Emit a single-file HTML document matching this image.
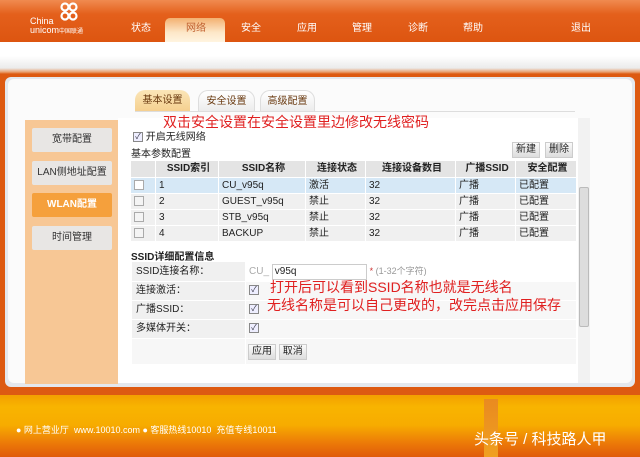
<!DOCTYPE html>
<html><head><meta charset="utf-8"><style>
*{margin:0;padding:0;box-sizing:border-box}
body{width:640px;height:457px;overflow:hidden;position:relative;font-family:"Liberation Sans","Noto Sans CJK SC",sans-serif;font-size:10px;color:#222;background:#fff}
.a{position:absolute}
.top{left:0;top:0;width:640px;height:42px;background:linear-gradient(#f08a50 0,#e4601c 14px,#dd5510 42px)}
.nav{top:19px;color:#fff;font-size:10px}
.band{left:0;top:42px;width:640px;height:32px;background:linear-gradient(#fff 0,#fff 14px,#ebebeb 26px,#e9a070 30px,#dd5a12 32px)}
.outer{left:0;top:74px;width:640px;height:322px;background:#dd5a12}
.foot{left:0;top:395px;width:640px;height:62px;background:linear-gradient(#f3a000 0,#f8b400 12px,#f7ac00 30px,#ec7a08 48px,#e05a0a 62px)}
.tab{top:90px;height:21px;border-radius:10px 10px 0 0;font-size:10px;text-align:center;line-height:21px;color:#6a3a10}
.side{left:25px;top:120px;width:93px;height:264px;background:#f7c795}
.btn{left:32px;width:80px;height:24px;background:#e8e6e4;text-align:center;line-height:24px;font-size:10px;color:#333;border-radius:2px}
table{border-collapse:collapse;table-layout:fixed}
td{border:1px solid #fff;height:16px;padding:0 0 0 3px;font-size:10px;line-height:14px;white-space:nowrap;overflow:hidden;vertical-align:middle}
.cb{display:inline-block;width:10px;height:10px;border:1px solid #aaa;background:#f4f4f4;vertical-align:middle}
.ck{display:inline-block;width:10px;height:10px;border:1px solid #888;background:#eef;font-size:8px;line-height:8px;text-align:center;color:#334;vertical-align:middle}
.red{color:#e02020;font-size:14px;white-space:nowrap}
.sb{display:inline-block;border:1px solid #ccc;background:linear-gradient(#fafafa,#ddd);padding:0 3px;height:16px;line-height:14px;font-size:10px}
</style></head><body>
<div class="a top"></div>
<div class="a" style="left:30px;top:17px;color:#fff;font-size:9px;line-height:9px">China<br>unicom<span style="font-size:6px">中国联通</span></div>
<svg class="a" style="left:58px;top:2px" width="22" height="20" viewBox="0 0 22 20"><g fill="none" stroke="#fff" stroke-width="2.2"><circle cx="7" cy="5" r="3.5"/><circle cx="15" cy="5" r="3.5"/><circle cx="7" cy="14" r="3.5"/><circle cx="15" cy="14" r="3.5"/></g></svg>
<div class="a" style="left:165px;top:18px;width:60px;height:24px;background:linear-gradient(#f3b070,#fde7c8 60%,#fff4e0);border-radius:5px 5px 0 0"></div>
<div class="a nav" style="left:131px">状态</div>
<div class="a nav" style="left:186px;color:#c06030">网络</div>
<div class="a nav" style="left:241px">安全</div>
<div class="a nav" style="left:297px">应用</div>
<div class="a nav" style="left:352px">管理</div>
<div class="a nav" style="left:408px">诊断</div>
<div class="a nav" style="left:463px">帮助</div>
<div class="a nav" style="left:571px">退出</div>
<div class="a band"></div>
<div class="a outer"></div>
<div class="a" style="left:5px;top:77px;width:630px;height:310px;background:#e4e8ee;border-radius:6px"></div>
<div class="a" style="left:8px;top:79px;width:624px;height:304px;background:#fbfbfb;border-radius:6px"></div>
<div class="a tab" style="left:135px;width:55px;background:linear-gradient(#fbe6b8,#f5d090)">基本设置</div>
<div class="a tab" style="left:198px;width:57px;background:linear-gradient(#fff,#ececec);border:1px solid #ddd;border-bottom:0">安全设置</div>
<div class="a tab" style="left:260px;width:55px;background:linear-gradient(#fff,#ececec);border:1px solid #ddd;border-bottom:0">高级配置</div>
<div class="a" style="left:135px;top:111px;width:440px;height:1px;background:#ddd"></div>
<div class="a side"></div>
<div class="a btn" style="top:128px">宽带配置</div>
<div class="a btn" style="top:161px">LAN侧地址配置</div>
<div class="a btn" style="top:193px;background:#f5a03c;color:#fff;font-weight:bold">WLAN配置</div>
<div class="a btn" style="top:226px">时间管理</div>
<div class="a" style="left:118px;top:118px;width:472px;height:265px;background:#fff"></div>
<div class="a" style="left:578px;top:118px;width:12px;height:265px;background:#f2f2f2"></div>
<div class="a" style="left:579px;top:187px;width:10px;height:140px;background:#ddd;border:1px solid #bbb;border-radius:2px"></div>
<div class="a red" style="left:163px;top:112px">双击安全设置在安全设置里边修改无线密码</div>
<div class="a" style="left:133px;top:128px"><span class="ck">✓</span> 开启无线网络</div>
<div class="a" style="left:131px;top:145px">基本参数配置</div>
<div class="a sb" style="left:512px;top:142px">新建</div>
<div class="a sb" style="left:545px;top:142px">删除</div>
<table class="a" style="left:130px;top:160px;width:447px">
<tr style="background:#e4e4e4;font-weight:bold"><td style="width:25px;height:17px"></td><td style="width:63px;text-align:center">SSID索引</td><td style="width:87px;text-align:center">SSID名称</td><td style="width:60px;text-align:center">连接状态</td><td style="width:90px;text-align:center">连接设备数目</td><td style="width:60px;text-align:center">广播SSID</td><td style="text-align:center">安全配置</td></tr>
<tr style="background:#d6e8f6"><td><span class="cb" style="background:#fff"></span></td><td>1</td><td>CU_v95q</td><td>激活</td><td>32</td><td>广播</td><td>已配置</td></tr>
<tr style="background:#f0f0f0"><td><span class="cb"></span></td><td>2</td><td>GUEST_v95q</td><td>禁止</td><td>32</td><td>广播</td><td>已配置</td></tr>
<tr style="background:#f0f0f0"><td><span class="cb"></span></td><td>3</td><td>STB_v95q</td><td>禁止</td><td>32</td><td>广播</td><td>已配置</td></tr>
<tr style="background:#f0f0f0"><td><span class="cb"></span></td><td>4</td><td>BACKUP</td><td>禁止</td><td>32</td><td>广播</td><td>已配置</td></tr>
</table>
<div class="a" style="left:131px;top:248px;font-weight:bold">SSID详细配置信息</div>
<table class="a" style="left:131px;top:261px;width:446px">
<tr style="background:#f0f0f0"><td style="width:114px;padding-left:4px;height:20px">SSID连接名称：</td><td style="background:#fff"><span style="color:#aaa">CU_</span> <span style="display:inline-block;width:95px;height:16px;border:1px solid #ccc;line-height:14px;padding-left:2px">v95q</span> <span style="color:#c33;font-size:9px">* <span style="color:#999">(1-32个字符)</span></span></td></tr>
<tr style="background:#f0f0f0"><td style="padding-left:4px;height:19px">连接激活：</td><td style="background:#f7f7f7"><span class="ck">✓</span></td></tr>
<tr style="background:#f0f0f0"><td style="padding-left:4px;height:19px">广播SSID：</td><td style="background:#f7f7f7"><span class="ck">✓</span></td></tr>
<tr style="background:#f0f0f0"><td style="padding-left:4px;height:19px">多媒体开关：</td><td style="background:#f7f7f7"><span class="ck">✓</span></td></tr>
<tr><td style="background:#f7f7f7;height:26px"></td><td style="background:#f7f7f7;padding-left:2px"><span class="sb">应用</span> <span class="sb">取消</span></td></tr>
</table>
<div class="a red" style="left:270px;top:277px">打开后可以看到SSID名称也就是无线名</div>
<div class="a red" style="left:267px;top:295px">无线名称是可以自己更改的，改完点击应用保存</div>
<div class="a foot"></div>
<div class="a" style="left:484px;top:399px;width:14px;height:58px;background:linear-gradient(#e98a20,#f0a020)"></div>
<div class="a" style="left:16px;top:423px;color:#fff;font-size:9px">● 网上营业厅&nbsp; www.10010.com ● 客服热线10010&nbsp; 充值专线10011</div>
<div class="a" style="left:474px;top:428px;color:#fff;font-size:15px">头条号 / 科技路人甲</div>
</body></html>
